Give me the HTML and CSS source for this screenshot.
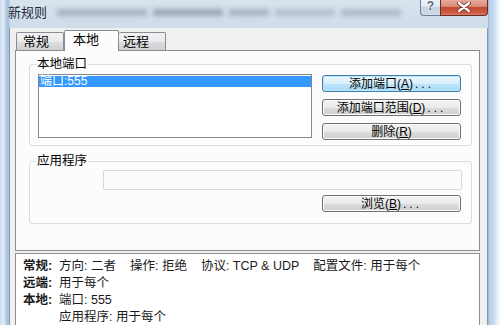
FILE: index.html
```html
<!DOCTYPE html>
<html>
<head>
<meta charset="utf-8">
<link rel="stylesheet" href="styles.css">
</head>
<body>
<div class="window">
  <div class="titlebar">
    <span class="title">新规则</span>
    <div class="blur"><i class="b1"></i><i class="b2"></i><i class="b3"></i><i class="b4"></i><i class="b5"></i></div>
    <div class="caption-btns">
      <span class="help">?</span>
      <span class="close"><svg width="14" height="10" viewBox="0 0 14 10"><path d="M2 1 L12 9 M12 1 L2 9" stroke="#6b2a20" stroke-width="4" stroke-linecap="round"/><path d="M2 1 L12 9 M12 1 L2 9" stroke="#ffffff" stroke-width="2.4" stroke-linecap="round"/></svg></span>
    </div>
  </div>
  <div class="client">
    <div class="tabs">
      <div class="tab t1">常规</div>
      <div class="tab t2 active">本地</div>
      <div class="tab t3">远程</div>
    </div>
    <div class="panel">
      <fieldset class="group g1">
        <legend>本地端口</legend>
        <div class="g1-body">
          <div class="listbox"><div class="item">端口:555</div></div>
          <div class="btns">
            <button class="btn default">添加端口(<u>A</u>)<span class="dots">...</span></button>
            <button class="btn">添加端口范围(<u>D</u>)<span class="dots">...</span></button>
            <button class="btn">删除(<u>R</u>)</button>
          </div>
        </div>
      </fieldset>
      <fieldset class="group g2">
        <legend>应用程序</legend>
        <div class="g2-body">
          <div class="input"></div>
          <button class="btn">浏览(<u>B</u>)<span class="dots">...</span></button>
        </div>
      </fieldset>
    </div>
    <div class="info">
      <div class="row"><b>常规:</b><span class="val">方向: 二者</span><span class="val">操作: 拒绝</span><span class="val">协议: TCP &amp; UDP</span><span class="val">配置文件: 用于每个</span></div>
      <div class="row"><b>远端:</b><span class="val">用于每个</span></div>
      <div class="row"><b>本地:</b><span class="val">端口: 555</span></div>
      <div class="row"><b></b><span class="val">应用程序: 用于每个</span></div>
    </div>
  </div>
</div>
</body>
</html>
```
FILE: styles.css
```css
* { box-sizing: border-box; }
html, body { margin: 0; padding: 0; }
body {
  width: 500px;
  height: 325px;
  overflow: hidden;
  font-family: "Liberation Sans", "Noto Sans CJK SC", sans-serif;
  font-size: 12px;
  color: #1a1a1a;
}
.window {
  width: 500px;
  height: 325px;
  overflow: hidden;
  display: flex;
  flex-direction: column;
  background: linear-gradient(90deg, #c9dbee 0px, #e4eef8 3px, #b9d0e8 6px, #9fb8d2 8px, #b9d0e8 9px) left / 10px 100% no-repeat,
              linear-gradient(90deg, #8ea6c0 0px, #b6cfe8 1px, #c7dbef 6px, #e6f0fa 9px, #f4f8fc 12px) right / 12px 100% no-repeat,
              linear-gradient(#d9e3ee, #cfdcea 28px, #bcd2ea 60px, #b8cfe8);
}
.titlebar {
  height: 28px;
  flex: none;
  display: flex;
  align-items: flex-start;
  padding: 0 12px 0 8px;
}
.title {
  font-size: 13px;
  line-height: 14px;
  margin-top: 6px;
  color: #1c2a3a;
}
.blur {
  display: flex;
  gap: 6px;
  margin: 9px 0 0 10px;
  flex: 1;
  filter: blur(2.5px);
}
.blur i { display: block; height: 7px; background: rgba(80, 95, 115, 0.35); }
.blur .b1 { width: 90px; }
.blur .b2 { width: 70px; background: rgba(80, 95, 115, 0.45); }
.blur .b3 { width: 40px; }
.blur .b4 { width: 60px; background: rgba(80, 95, 115, 0.25); }
.blur .b5 { width: 60px; background: rgba(80, 95, 115, 0.3); }
.caption-btns {
  display: flex;
  margin-left: 18px;
}
.help {
  width: 20px;
  height: 16px;
  border: 1px solid #6f819a;
  border-top: none;
  border-right: none;
  border-radius: 0 0 0 4px;
  background: linear-gradient(#eef3f8, #dde6f0 45%, #c6d3e2 50%, #d2ddea);
  color: #5b6b82;
  font-weight: bold;
  font-size: 12px;
  line-height: 13px;
  text-align: center;
  text-shadow: 0 0 2px #fff;
}
.close {
  width: 48px;
  height: 16px;
  border: 1px solid #6e2a22;
  border-top: none;
  border-radius: 0 0 4px 0;
  background: linear-gradient(#e8a99c, #d98776 45%, #c44a35 50%, #cc5a44 85%, #d9806c);
  display: flex;
  align-items: center;
  justify-content: center;
  padding-bottom: 1px;
}
.client {
  flex: 1;
  margin: 0 12px 0 9px;
  border-left: 1px solid #8397ae;
  border-right: 1px solid #8397ae;
  background: #f0f0f0;
  padding: 0 7px 0 5px;
  display: flex;
  flex-direction: column;
}
.tabs {
  height: 22px;
  flex: none;
  display: flex;
  align-items: flex-end;
  padding-left: 1px;
}
.tab {
  height: 18px;
  border: 1px solid #898c95;
  border-bottom: none;
  border-radius: 2px 2px 0 0;
  background: linear-gradient(#f2f2f2, #ebebeb 50%, #dddddd 51%, #cfcfcf);
  font-size: 13px;
  line-height: 17px;
  color: #000;
}
.t1 { width: 48px; padding-left: 6px; }
.t2 { width: 55px; padding-left: 8px; }
.t3 { width: 47px; padding-left: 4px; border-left: none; }
.tab.active {
  position: relative;
  height: 21px;
  margin-bottom: -1px;
  background: #fcfcfc;
  line-height: 17px;
}
.panel {
  height: 201px;
  flex: none;
  border: 1px solid #898c95;
  background: #fcfcfc;
  padding: 0 7px 0 13px;
  display: flex;
  flex-direction: column;
}
.group {
  margin: 0;
  padding: 0;
  border: 1px solid #d5dfe5;
  border-radius: 3px;
  min-inline-size: 0;
}
.group legend {
  margin-left: 6px;
  padding: 0 1px;
  font-size: 12.5px;
  line-height: 14px;
  color: #000;
}
.g1 { margin-top: 6px; }
.g1-body {
  display: flex;
  gap: 10px;
  padding: 3px 10px 5px 8px;
}
.listbox {
  width: 274px;
  height: 64px;
  border: 1px solid #828790;
  background: #fff;
  padding: 1px 0 0 0;
}
.item {
  height: 11px;
  background: #3399ff;
  color: #fff;
  line-height: 11px;
  font-size: 12px;
  padding-left: 1px;
}
.btns {
  display: flex;
  flex-direction: column;
  gap: 7px;
  padding-top: 1px;
}
.btn {
  width: 139px;
  height: 17px;
  padding: 0;
  border: 1px solid #707070;
  border-radius: 3px;
  background: linear-gradient(#f2f2f2, #ebebeb 50%, #dddddd 51%, #cfcfcf);
  font-family: inherit;
  font-size: 12px;
  line-height: 14px;
  color: #000;
  text-align: center;
  box-shadow: inset 0 0 0 1px #fcfcfc;
}
.btn.default {
  border-color: #3c7fb1;
  background: linear-gradient(#eaf6fd, #d9f0fc 50%, #bee6fd 51%, #a7d9f5);
  box-shadow: inset 0 0 0 1px #c4e5f6;
}
.btn u { text-decoration: underline; }
.dots { letter-spacing: 3px; margin-left: 2px; }
.g2 { margin-top: 8px; }
.g2-body {
  display: flex;
  flex-direction: column;
  align-items: flex-end;
  gap: 5px;
  padding: 2px 10px 11px 74px;
}
.input {
  width: 359px;
  height: 20px;
  border: 1px solid #d9d9d9;
  border-radius: 2px;
  background: #fbfbfb;
  margin-right: -1px;
}
.info {
  margin-top: 2px;
  flex: 1;
  border: 1px solid #8e8f8f;
  background: #fff;
  padding: 4px 7px 0 7px;
}
.row {
  display: flex;
  height: 17px;
  line-height: 17px;
  font-size: 12.5px;
  white-space: nowrap;
  color: #1a1a1a;
}
.row b {
  width: 36px;
  flex: none;
  font-weight: bold;
}
.row .val { margin-right: 14px; }
```
